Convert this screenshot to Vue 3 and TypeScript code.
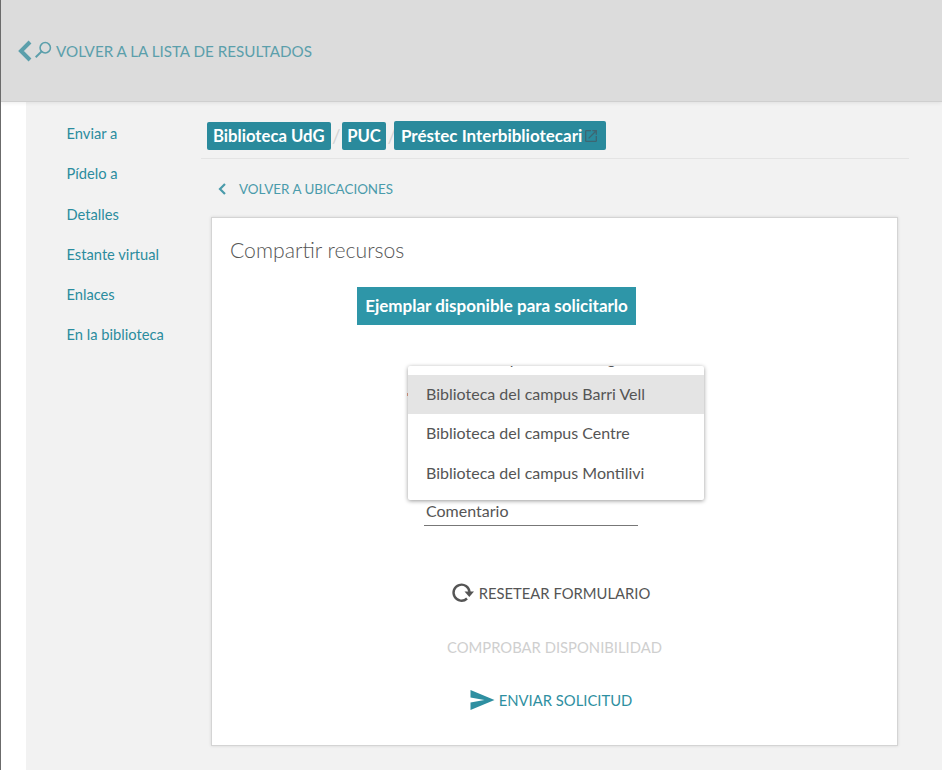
<template>
  <div class="page">
    <header class="top-bar">
      <a class="back-results">
        <svg class="chevron-big" viewBox="0 0 16 24" width="16" height="24" aria-hidden="true">
          <path d="M13 3 L4 12 L13 21" fill="none" stroke="currentColor" stroke-width="4" />
        </svg>
        <svg class="search-icon" viewBox="0 0 16 16" width="18" height="18" aria-hidden="true">
          <circle cx="10" cy="6" r="4.6" fill="none" stroke="currentColor" stroke-width="1.4" />
          <path d="M7 9 L1.5 14.5" fill="none" stroke="currentColor" stroke-width="1.8" />
        </svg>
        <span>VOLVER A LA LISTA DE RESULTADOS</span>
      </a>
    </header>

    <div class="body-row">
      <div class="gutter"></div>
      <div class="content">
        <nav class="side-nav">
          <a v-for="item in navItems" :key="item">{{ item }}</a>
        </nav>

        <main class="main">
          <div class="crumbs">
            <span class="crumb">Biblioteca UdG</span>
            <span class="sep">/</span>
            <span class="crumb crumb-short">PUC</span>
            <span class="sep">/</span>
            <span class="crumb crumb-last">
              Préstec Interbibliotecari
              <svg viewBox="0 0 24 24" width="16" height="16" aria-hidden="true">
                <path
                  d="M19 19H5V5h7V3H5a2 2 0 0 0-2 2v14a2 2 0 0 0 2 2h14a2 2 0 0 0 2-2v-7h-2v7zM14 3v2h3.59l-9.83 9.83 1.41 1.41L19 6.41V10h2V3h-7z"
                  fill="currentColor"
                />
              </svg>
            </span>
          </div>

          <a class="back-locations">
            <svg viewBox="0 0 10 14" width="10" height="14" aria-hidden="true">
              <path d="M8 2 L3 7 L8 12" fill="none" stroke="currentColor" stroke-width="2.2" />
            </svg>
            <span>VOLVER A UBICACIONES</span>
          </a>

          <section class="card">
            <h2>Compartir recursos</h2>
            <div class="status">Ejemplar disponible para solicitarlo</div>

            <div class="form">
              <div class="select-spacer"></div>
              <div class="field">Comentario</div>
              <span class="required-mark"></span>
              <div class="dropdown">
                <div class="clipped">Seleccionar punto de recogida</div>
                <div
                  v-for="(option, i) in options"
                  :key="option"
                  class="option"
                  :class="{ selected: i === 0 }"
                >
                  {{ option }}
                </div>
              </div>
            </div>

            <div class="actions">
              <button class="action reset" type="button">
                <svg viewBox="0 0 24 24" width="24" height="24" aria-hidden="true">
                  <path d="M17 17.5A8 8 0 1 1 19.5 11" fill="none" stroke="currentColor" stroke-width="2.4" />
                  <path d="M14.5 10.5h9.5l-4.7 5.5z" fill="currentColor" />
                </svg>
                RESETEAR FORMULARIO
              </button>
              <button class="action disabled" type="button">COMPROBAR DISPONIBILIDAD</button>
              <button class="action send" type="button">
                <svg viewBox="0 0 24 20" width="25" height="20" aria-hidden="true">
                  <path d="M0 0 L24 10 L0 20 L0 12.5 L14 10 L0 7.5 Z" fill="currentColor" />
                </svg>
                ENVIAR SOLICITUD
              </button>
            </div>
          </section>
        </main>
      </div>
    </div>
  </div>
</template>

<script setup lang="ts">
const navItems: string[] = ['Enviar a', 'Pídelo a', 'Detalles', 'Estante virtual', 'Enlaces', 'En la biblioteca']
const options: string[] = [
  'Biblioteca del campus Barri Vell',
  'Biblioteca del campus Centre',
  'Biblioteca del campus Montilivi',
]
</script>

<style>
html,
body {
  margin: 0;
  height: 100%;
  overflow: hidden;
}
</style>

<style scoped>
.page {
  height: 770px;
  border-left: 1px solid #6b6b6b;
  background: #fff;
  font-family: Lato, "Open Sans", sans-serif;
  font-size: 15px;
  color: #555;
  display: flex;
  flex-direction: column;
  overflow: hidden;
}

.top-bar {
  height: 102px;
  flex: none;
  background: #dcdcdc;
  border-bottom: 1px solid #cfcfcf;
  box-sizing: border-box;
  display: flex;
  align-items: center;
  padding-left: 16px;
  position: relative;
  box-shadow: 0 1px 4px rgba(0, 0, 0, 0.08);
}

.back-results {
  display: flex;
  align-items: center;
  color: #5b9fab;
  font-size: 15.2px;
}

.search-icon {
  margin: 0 4px 2px 1px;
}

.body-row {
  flex: 1;
  display: flex;
  min-height: 0;
}

.gutter {
  width: 25px;
  flex: none;
}

.content {
  flex: 1;
  background: #f2f2f2;
  display: flex;
}

.side-nav {
  width: 175px;
  flex: none;
  padding: 21px 0 0 40.5px;
  box-sizing: border-box;
  display: flex;
  flex-direction: column;
  gap: 20.3px;
  color: #2b8c9e;
  font-size: 14.7px;
  line-height: 20px;
}

.main {
  width: 708px;
  flex: none;
  padding-top: 19px;
  box-sizing: border-box;
}

.crumbs {
  display: flex;
  align-items: center;
  gap: 1.5px;
  padding: 0 0 8px 6px;
  border-bottom: 1px solid #e4e4e4;
  margin-bottom: 20px;
}

.crumb {
  display: inline-flex;
  align-items: center;
  height: 28px;
  padding: 0 6px;
  background: #2a8a9c;
  border-radius: 2px;
  color: #fff;
  font-weight: 700;
  font-size: 16.7px;
  white-space: nowrap;
}

.crumb-short {
  padding: 0 5px;
}

.crumb-last {
  height: 29px;
  gap: 1px;
  margin-left: -3.5px;
  padding: 0 7px;
  font-size: 17px;
}

.crumb-last svg {
  color: #3d6672;
}

.sep {
  flex: 0 0 5.5px;
  color: #d2d2d2;
  font-size: 19px;
  line-height: 20px;
}

.back-locations {
  display: flex;
  align-items: center;
  gap: 12px;
  padding-left: 16px;
  height: 20px;
  color: #4a9bab;
  font-size: 13.4px;
}

.card {
  margin: 18px 0 0 10px;
  width: 687px;
  height: 529px;
  box-sizing: border-box;
  background: #fff;
  border: 1px solid #d4d4d4;
  box-shadow: 0 0 3px rgba(0, 0, 0, 0.12);
  padding: 18px 18px 0;
  display: flex;
  flex-direction: column;
}

h2 {
  margin: 0;
  font-size: 21.2px;
  line-height: 28px;
  font-weight: 300;
  color: #555;
}

.status {
  align-self: flex-start;
  margin: 23px 0 0 127px;
  width: 279px;
  height: 38px;
  box-sizing: border-box;
  background: #2e96a8;
  color: #fff;
  font-weight: 700;
  font-size: 17px;
  line-height: 38px;
  text-align: center;
  white-space: nowrap;
}

.form {
  position: relative;
  margin-left: 194px;
  width: 214px;
}

.select-spacer {
  height: 173px;
}

.field {
  height: 28px;
  line-height: 26px;
  padding-left: 2px;
  border-bottom: 1px solid #777;
  box-sizing: border-box;
  color: #555;
  font-size: 16px;
}

.required-mark {
  position: absolute;
  top: 68px;
  left: -17px;
  width: 1px;
  height: 3px;
  background: #e8a48c;
}

.dropdown {
  position: absolute;
  top: 41px;
  left: -16px;
  width: 296px;
  height: 134px;
  overflow: hidden;
  background: #fff;
  box-shadow: 0 1px 4px rgba(0, 0, 0, 0.4);
  border-radius: 2px;
}

.clipped {
  height: 36px;
  margin-top: -27px;
  line-height: 38px;
  padding-left: 18px;
  font-size: 16px;
  color: #555;
  white-space: nowrap;
}

.option {
  height: 39.3px;
  line-height: 37px;
  padding-left: 18px;
  font-size: 16px;
  color: #555;
  white-space: nowrap;
}

.option.selected {
  background: #e4e4e4;
}

.actions {
  margin-top: 49px;
  display: flex;
  flex-direction: column;
  align-items: center;
  gap: 17.5px;
}

.action {
  height: 36px;
  display: flex;
  align-items: center;
  gap: 5px;
  border: none;
  background: none;
  padding: 0;
  font: inherit;
  font-size: 14.8px;
  color: #555;
}

.action.reset {
  padding-right: 9px;
}

.action.send {
  padding-right: 7px;
  gap: 4px;
}

.action.disabled {
  color: #cfcfcf;
}

.action.send {
  color: #2e8fa1;
}
</style>
